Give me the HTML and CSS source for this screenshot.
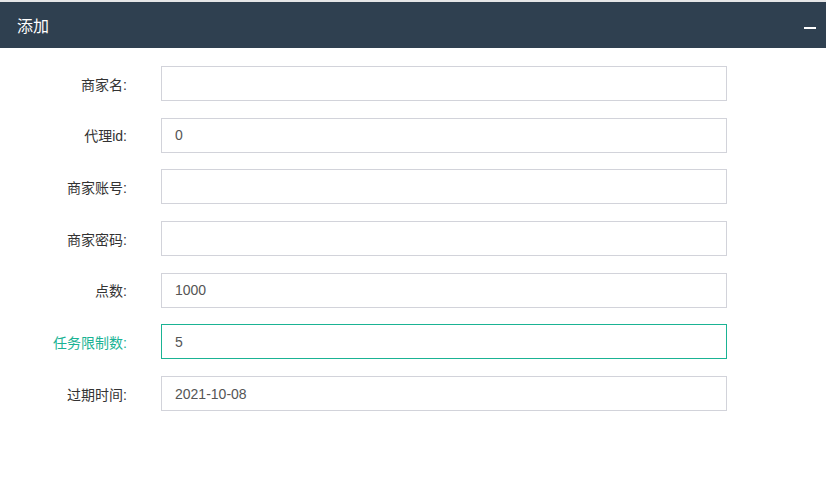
FILE: index.html
```html
<!DOCTYPE html>
<html lang="zh">
<head>
    <meta charset="UTF-8">
    <title>添加</title>
    <link rel="stylesheet" href="styles.css">
</head>
<body>
    <div class="layer">
        <div class="layer-title">
            <span>添加</span>
            <span class="layer-min"></span>
        </div>
        <form class="layer-content">
            <div class="form-group">
                <label>商家名:</label>
                <input type="text" value="">
            </div>
            <div class="form-group">
                <label>代理id:</label>
                <input type="text" value="0">
            </div>
            <div class="form-group">
                <label>商家账号:</label>
                <input type="text" value="">
            </div>
            <div class="form-group">
                <label>商家密码:</label>
                <input type="text" value="">
            </div>
            <div class="form-group">
                <label>点数:</label>
                <input type="text" value="1000">
            </div>
            <div class="form-group active">
                <label>任务限制数:</label>
                <input type="text" value="5">
            </div>
            <div class="form-group">
                <label>过期时间:</label>
                <input type="text" value="2021-10-08">
            </div>
        </form>
    </div>
</body>
</html>
```

FILE: styles.css
```css
* {
    margin: 0;
    padding: 0;
    box-sizing: border-box;
}

body {
    font-family: "Liberation Sans", Arial, "Noto Sans CJK SC", sans-serif;
    background-color: #fff;
    border-top: 2px solid #e5e6e7;
}

.layer-title {
    height: 46px;
    background-color: #2f4050;
    color: #fff;
    font-size: 16px;
    display: flex;
    align-items: center;
    justify-content: space-between;
    padding: 0 10px 0 17px;
}

.layer-min {
    width: 12px;
    height: 2px;
    background-color: #fff;
    margin-top: 6px;
}

.layer-content {
    padding-top: 18px;
}

.form-group {
    display: flex;
    align-items: center;
    height: 35px;
    margin-bottom: 16.7px;
}

.form-group label {
    width: 127px;
    text-align: right;
    font-size: 14px;
    color: #333;
    margin-right: 34px;
}

.form-group input {
    width: 566px;
    height: 35px;
    border: 1px solid #d2d3da;
    padding: 0 13px;
    font-family: inherit;
    font-size: 14px;
    color: #555;
    outline: none;
}

.form-group.active label {
    color: #1ab394;
}

.form-group.active input {
    border-color: #1ab394;
}
```
